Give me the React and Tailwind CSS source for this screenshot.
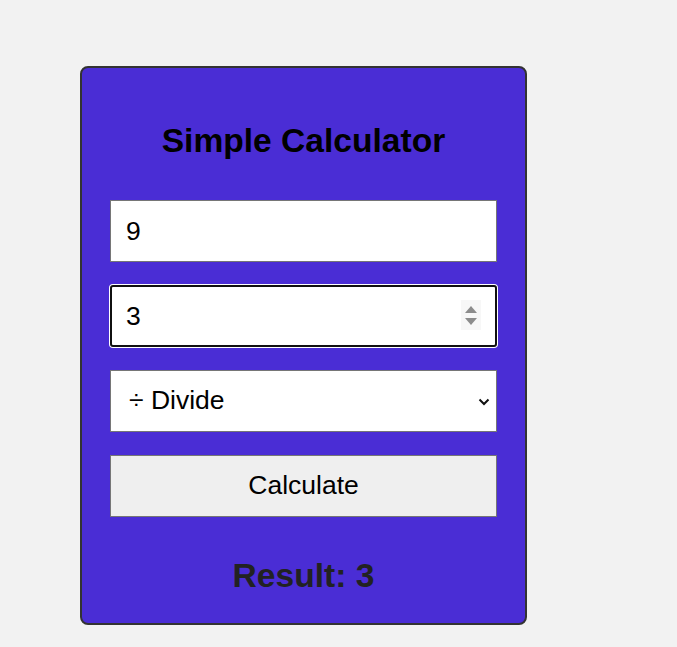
import { useState } from "react";

function Spinner() {
  return (
    <div className="absolute right-[16px] top-[15px] flex h-[30px] w-[20px] flex-col items-center justify-center gap-[5px] bg-[#f7f7f7]">
      <svg width="12" height="7" viewBox="0 0 12 7">
        <path d="M6 0 L12 7 L0 7 Z" fill="#8c8c8c" />
      </svg>
      <svg width="12" height="7" viewBox="0 0 12 7">
        <path d="M0 0 L12 0 L6 7 Z" fill="#8c8c8c" />
      </svg>
    </div>
  );
}

export default function App() {
  const [first, setFirst] = useState("9");
  const [second, setSecond] = useState("3");
  const [op, setOp] = useState("divide");

  return (
    <div className="min-h-[647px] w-full bg-[#f2f2f2] pt-[66px] pl-[80px] font-['Liberation_Sans',Arial,sans-serif]">
      <div className="flex w-[447px] flex-col rounded-[8px] border-2 border-[#333] bg-[#4a2dd5] px-[28px] pt-[54px] pb-[28px]">
        <h1 className="text-center text-[33.6px] leading-[38px] font-bold text-black">
          Simple Calculator
        </h1>

        <div className="mt-[40px] flex flex-col gap-[23px]">
          <input
            type="text"
            value={first}
            onChange={(e) => setFirst(e.target.value)}
            className="h-[62px] w-full border border-[#767676] bg-white px-[15px] text-[26.5px] text-black outline-none"
          />

          <div className="relative">
            <input
              type="text"
              value={second}
              onChange={(e) => setSecond(e.target.value)}
              className="h-[62px] w-full rounded-[3px] border-2 border-[#101010] bg-white px-[14px] text-[26.5px] text-black shadow-[0_0_0_1px_#ffffff] outline-none"
            />
            <Spinner />
          </div>

          <div className="relative">
            <select
              value={op}
              onChange={(e) => setOp(e.target.value)}
              className="h-[62px] w-full appearance-none border border-[#767676] bg-white pl-[18px] pr-[40px] text-[26.5px] text-black outline-none"
            >
              <option value="add">+ Add</option>
              <option value="subtract">− Subtract</option>
              <option value="multiply">× Multiply</option>
              <option value="divide">÷ Divide</option>
            </select>
            <svg
              className="pointer-events-none absolute right-[7px] top-[28px]"
              width="12"
              height="8"
              viewBox="0 0 12 8"
            >
              <path d="M1.5 1.5 L6 6 L10.5 1.5" fill="none" stroke="#111" strokeWidth="2" />
            </svg>
          </div>

          <button className="h-[62px] w-full border border-[#767676] bg-[#efefef] text-[26.5px] text-black">
            Calculate
          </button>
        </div>

        <div className="mt-[40px] text-center text-[33.6px] leading-[38px] font-bold text-[#222]">
          Result: 3
        </div>
      </div>
    </div>
  );
}
